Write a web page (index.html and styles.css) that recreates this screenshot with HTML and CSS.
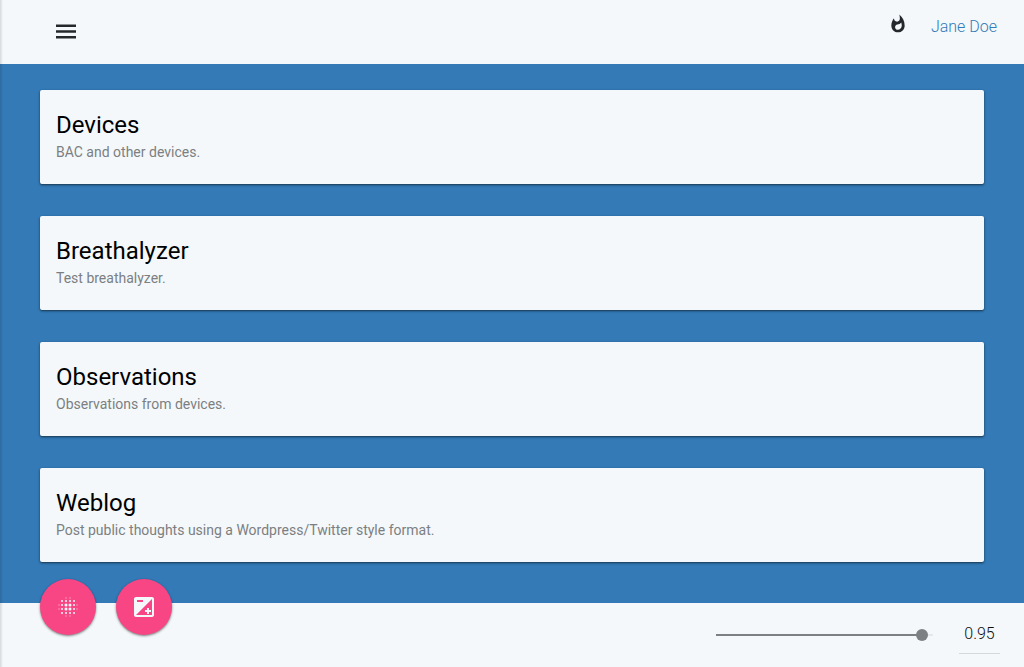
FILE: index.html
```html
<!DOCTYPE html>
<html lang="en">
<head>
<meta charset="utf-8">
<meta name="viewport" content="width=device-width, initial-scale=1">
<title>Home</title>
<link rel="stylesheet" href="styles.css">
</head>
<body>
<header class="topbar">
  <button class="icon-button" type="button" aria-label="Open menu">
    <svg width="20" height="15" viewBox="0 0 20 15" fill="currentColor" aria-hidden="true"><path d="M0 .6h20v2.4H0zM0 6.3h20v2.4H0zM0 12h20v2.4H0z"/></svg>
  </button>
  <div class="account">
    <button class="icon-button" type="button" aria-label="What's hot">
      <svg width="20" height="20" viewBox="0 0 24 24" fill="currentColor" aria-hidden="true"><path d="M13.5.67s.74 2.65.74 4.8c0 2.06-1.35 3.73-3.41 3.73-2.07 0-3.63-1.67-3.63-3.73l.03-.36C5.21 7.51 4 10.62 4 14c0 4.42 3.58 8 8 8s8-3.58 8-8C20 8.61 17.41 3.8 13.5.67zM11.71 19c-1.78 0-3.22-1.4-3.22-3.14 0-1.62 1.05-2.76 2.81-3.12 1.77-.36 3.6-1.21 4.62-2.58.39 1.29.59 2.65.59 4.04 0 2.65-2.15 4.8-4.8 4.8z"/></svg>
    </button>
    <a class="user-link" href="#profile">Jane Doe</a>
  </div>
</header>
<main class="cards">
  <article class="card">
    <h2 class="card-title">Devices</h2>
    <p class="card-subtitle">BAC and other devices.</p>
  </article>
  <article class="card">
    <h2 class="card-title">Breathalyzer</h2>
    <p class="card-subtitle">Test breathalyzer.</p>
  </article>
  <article class="card">
    <h2 class="card-title">Observations</h2>
    <p class="card-subtitle">Observations from devices.</p>
  </article>
  <article class="card">
    <h2 class="card-title">Weblog</h2>
    <p class="card-subtitle">Post public thoughts using a Wordpress/Twitter style format.</p>
  </article>
</main>
<footer class="bottombar">
  <div class="fabs">
    <button class="fab" type="button" aria-label="Blur">
      <svg width="24" height="24" viewBox="0 0 24 24" fill="currentColor" aria-hidden="true">
        <path d="M5 5h2v2H5zM9 5h2v2H9zM13 5h2v2h-2zM17 5h2v2h-2zM5 9h2v2H5zM17 9h2v2h-2zM5 13h2v2H5zM17 13h2v2h-2zM5 17h2v2H5zM9 17h2v2H9zM13 17h2v2h-2zM17 17h2v2h-2z" opacity=".75"/>
        <path d="M9 2h2v2H9zM13 2h2v2h-2zM9 20h2v2H9zM13 20h2v2h-2zM2 9h2v2H2zM2 13h2v2H2zM20 9h2v2h-2zM20 13h2v2h-2z" opacity=".2"/>
        <circle cx="10" cy="10" r="1.5"/><circle cx="14" cy="10" r="1.5"/><circle cx="10" cy="14" r="1.5"/><circle cx="14" cy="14" r="1.5"/>
      </svg>
    </button>
    <button class="fab" type="button" aria-label="Exposure">
      <svg width="24" height="24" viewBox="0 0 24 24" fill="currentColor" aria-hidden="true"><path d="M15 17v2h2v-2h2v-2h-2v-2h-2v2h-2v2h2zm5-15H4c-1.1 0-2 .9-2 2v16c0 1.1.9 2 2 2h16c1.1 0 2-.9 2-2V4c0-1.1-.9-2-2-2zM5 5h6v2H5V5zm15 15H4L20 4v16z"/></svg>
    </button>
  </div>
  <input class="slider" type="range" min="0" max="1" step="0.01" value="0.95" aria-label="Opacity">
  <input class="value" type="text" value="0.95" aria-label="Opacity value">
</footer>
</body>
</html>
```
FILE: styles.css
```css
* { box-sizing: border-box; }

body {
  margin: 0;
  min-height: 100vh;
  display: flex;
  flex-direction: column;
  background: #337ab7;
  color: #24282c;
  font-family: Roboto, "Liberation Sans", sans-serif;
  font-size: 16px;
}

/* Shadow cast by the closed side drawer */
body::before {
  content: "";
  position: fixed;
  z-index: 1;
  top: 0;
  bottom: 0;
  left: 0;
  width: 3px;
  background: linear-gradient(to right, rgba(0, 0, 0, 0.12), rgba(0, 0, 0, 0));
  pointer-events: none;
}

.topbar {
  display: flex;
  justify-content: space-between;
  align-items: flex-start;
  min-height: 64px;
  padding: 14px 27px 0 56px;
  background: #f4f8fb;
}

.icon-button {
  display: flex;
  padding: 0;
  border: 0;
  background: none;
  color: inherit;
  cursor: pointer;
}

.topbar > .icon-button { padding: 10px 0; }

.account {
  display: flex;
  align-items: flex-start;
  gap: 23px;
}

.user-link {
  color: #337ab7;
  font-weight: 300;
  line-height: 26px;
  text-decoration: none;
}

.cards {
  flex: 1;
  display: flex;
  flex-direction: column;
  gap: 32px;
  padding: 26px 40px 40px;
}

.card {
  padding: 17px 16px 23px;
  border-radius: 2px;
  background: #f4f8fb;
  box-shadow: 0 1px 3px rgba(0, 0, 0, 0.3), 0 1px 2px rgba(0, 0, 0, 0.35);
}

.card-title {
  margin: 0;
  color: #000;
  font-size: 24px;
  font-weight: 400;
  line-height: 36px;
}

.card-subtitle {
  margin: 0;
  color: #7c7f81;
  font-size: 14px;
  line-height: 18px;
}

.bottombar {
  position: relative;
  display: flex;
  justify-content: flex-end;
  align-items: flex-start;
  gap: 20px;
  min-height: 64px;
  padding: 12px 24px 0;
  background: #f4f8fb;
}

.fabs {
  position: absolute;
  top: -24px;
  left: 40px;
  display: flex;
  gap: 20px;
}

.fab {
  display: flex;
  align-items: center;
  justify-content: center;
  width: 56px;
  height: 56px;
  padding: 0;
  border: 0;
  border-radius: 50%;
  background: #f84684;
  color: #f4f8fb;
  box-shadow: 0 1px 3px rgba(0, 0, 0, 0.25), 0 1px 2px rgba(0, 0, 0, 0.3);
  cursor: pointer;
}

.slider {
  appearance: none;
  width: 229px;
  height: 40px;
  margin: 0;
  background: linear-gradient(to right, #7c8083 95%, #e4e8ea 95%) center / calc(100% - 12px) 2px no-repeat;
}

.slider::-webkit-slider-thumb {
  appearance: none;
  width: 12px;
  height: 12px;
  border-radius: 50%;
  background: #7c8083;
}

.value {
  width: 41px;
  height: 39px;
  padding: 0 0 2px;
  border: 0;
  border-bottom: 1px solid #d5d9dc;
  background: none;
  color: #0c0e10;
  font: inherit;
  font-weight: 300;
  text-align: center;
}
```
